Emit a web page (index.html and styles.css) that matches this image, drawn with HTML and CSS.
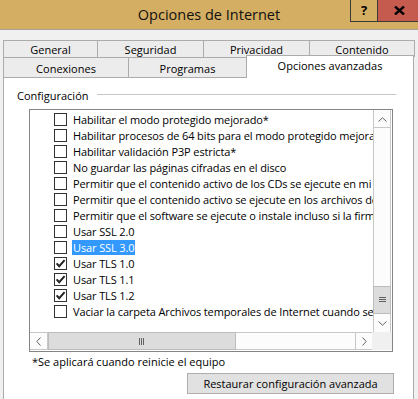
FILE: index.html
```html
<!DOCTYPE html>
<html lang="es">
<head>
  <meta charset="UTF-8" />
  <title>Opciones de Internet</title>
  <link rel="stylesheet" href="styles.css">
</head>
<body>
  <!-- =========  TITLE BAR  ========= -->
  <header class="titlebar">
    <h1 class="title">Opciones de Internet</h1>
    <div class="win-btns">
      <button class="win-btn help" aria-label="Ayuda">?</button>
      <button class="win-btn close" aria-label="Cerrar">
        <svg width="11" height="9" viewBox="0 0 11 9"><path d="M1 0.5 L10 8.5 M10 0.5 L1 8.5" stroke="#000" stroke-width="2.4"/></svg>
      </button>
    </div>
  </header>

  <!-- =========  TABS  ========= -->
  <nav class="tabs">
    <div class="tab-row row-top">
      <span class="tab t-general">General</span>
      <span class="tab t-seg">Seguridad</span>
      <span class="tab t-priv">Privacidad</span>
      <span class="tab t-cont last">Contenido</span>
    </div>
    <div class="tab-row row-bottom">
      <span class="tab t-con">Conexiones</span>
      <span class="tab t-prog">Programas</span>
      <span class="tab t-adv last active">Opciones avanzadas</span>
    </div>
  </nav>

  <!-- =========  PANEL  ========= -->
  <main class="panel">
    <div class="group-head">
      <span>Configuración</span>
      <i class="rule"></i>
    </div>

    <div class="listbox">
      <div class="list-view">
        <ul class="items">
          <li><span class="chk"></span><span class="lbl">Habilitar el modo protegido mejorado*</span></li>
          <li><span class="chk"></span><span class="lbl">Habilitar procesos de 64 bits para el modo protegido mejorado*</span></li>
          <li><span class="chk"></span><span class="lbl">Habilitar validación P3P estricta*</span></li>
          <li><span class="chk"></span><span class="lbl">No guardar las páginas cifradas en el disco</span></li>
          <li><span class="chk"></span><span class="lbl">Permitir que el contenido activo de los CDs se ejecute en mi equipo*</span></li>
          <li><span class="chk"></span><span class="lbl">Permitir que el contenido activo se ejecute en los archivos de mi equipo*</span></li>
          <li><span class="chk"></span><span class="lbl">Permitir que el software se ejecute o instale incluso si la firma no es válida</span></li>
          <li><span class="chk"></span><span class="lbl">Usar SSL 2.0</span></li>
          <li><span class="chk"></span><span class="lbl selected">Usar SSL 3.0</span></li>
          <li><span class="chk on"></span><span class="lbl">Usar TLS 1.0</span></li>
          <li><span class="chk on"></span><span class="lbl">Usar TLS 1.1</span></li>
          <li><span class="chk on"></span><span class="lbl">Usar TLS 1.2</span></li>
          <li><span class="chk"></span><span class="lbl">Vaciar la carpeta Archivos temporales de Internet cuando se cierre el explorador</span></li>
        </ul>

        <div class="vscroll">
          <span class="sb-btn up">
            <svg width="9" height="5" viewBox="0 0 9 5"><path d="M0.5 4.5 L4.5 0.8 L8.5 4.5" fill="none" stroke="#606060"/></svg>
          </span>
          <span class="sb-track"></span>
          <span class="sb-thumb v">
            <svg width="7" height="6" viewBox="0 0 7 6"><path d="M0 0.5 H7 M0 2.5 H7 M0 4.5 H7" stroke="#606060"/></svg>
          </span>
          <span class="sb-btn down">
            <svg width="9" height="5" viewBox="0 0 9 5"><path d="M0.5 0.5 L4.5 4.2 L8.5 0.5" fill="none" stroke="#606060"/></svg>
          </span>
        </div>
      </div>

      <div class="hscroll-row">
        <div class="hscroll">
          <span class="sb-btn left">
            <svg width="5" height="9" viewBox="0 0 5 9"><path d="M4.5 0.5 L0.8 4.5 L4.5 8.5" fill="none" stroke="#606060"/></svg>
          </span>
          <span class="sb-thumb h">
            <svg width="6" height="7" viewBox="0 0 6 7"><path d="M0.5 0 V7 M2.5 0 V7 M4.5 0 V7" stroke="#606060"/></svg>
          </span>
          <span class="sb-track"></span>
          <span class="sb-btn right">
            <svg width="5" height="9" viewBox="0 0 5 9"><path d="M0.5 0.5 L4.2 4.5 L0.5 8.5" fill="none" stroke="#606060"/></svg>
          </span>
        </div>
        <span class="corner"></span>
      </div>
    </div>

    <p class="note">*Se aplicará cuando reinicie el equipo</p>

    <div class="actions">
      <button class="btn">Restaurar configuración avanzada</button>
    </div>
  </main>
</body>
</html>
```

FILE: styles.css
```css
/* --- tokens --- */
:root {
  --title: #d4ae62;
  --face:  #f0f0f0;
  --edge:  #acacac;
  --sb:    #c8c8c8;
  --ui: "Open Sans", "Noto Sans", sans-serif;
}

* { box-sizing: border-box; margin:0; padding:0; }

body {
  font-family: var(--ui);
  font-size: 11px;
  color: #000;
  background: var(--face);
  width: 418px;
  height: 399px;
  overflow: hidden;
}

/* --- title bar --- */
.titlebar {
  height: 30px;
  background: var(--title);
  border-bottom: 1px solid #a9a397;
  display: flex;
  padding-left: 68px;
}
.title {
  flex: 1;
  text-align: center;
  font-weight: 400;
  font-size: 14.5px;
  line-height: 29px;
  color: #111;
}
.win-btns { display:flex; align-items:flex-start; }
.win-btn {
  height: 22px;
  border: none;
  font-family: var(--ui);
  display: flex; align-items: center; justify-content: center;
}
.help {
  width: 28px;
  background: var(--title);
  border: 1px solid #3c3a36;
  border-top: none;
  font-weight: 700;
  font-size: 13px;
  padding-bottom: 1px;
}
.close {
  width: 40px;
  background: #c55a4f;
  border-bottom: 1px solid #3c3a36;
  padding-left: 3px;
}

/* --- tabs --- */
.tabs { padding: 10px 0 0 3px; }
.tab-row { display:flex; }
.row-top { height: 17px; }
.row-bottom { height: 20px; }
.tab {
  display: flex; align-items: center; justify-content: center;
  border-top: 1px solid var(--edge);
  border-left: 1px solid var(--edge);
  background: #ececec;
  padding-top: 1px;
}
.tab.last { border-right: 1px solid var(--edge); }
.t-general { width: 94px; }
.t-seg, .t-priv { width: 106px; }
.t-cont { width: 106px; }
.t-con { width: 125px; }
.t-prog { width: 118px; }
.t-adv { width: 168px; }
.tab.active {
  position: relative;
  z-index: 1;
  margin-top: -2px;
  height: 23px;
  background: #fff;
  align-items: flex-start;
  padding-top: 2px;
}

/* --- panel --- */
.panel {
  margin: 0 4px 0 3px;
  height: 330px;
  background: #fff;
  border: 1px solid var(--edge);
  padding: 8px 17px 0 13px;
}
.group-head {
  display: flex;
  align-items: center;
  gap: 8px;
  height: 18px;
}
.rule { flex: 1; height: 1px; background: #c6c6c6; margin-top: -2px; }

/* --- list box --- */
.listbox {
  margin: 5px 0 0 12px;
  width: 364px;
  height: 243px;
  border: 1px solid #848484;
  display: flex;
  flex-direction: column;
}
.list-view { display:flex; height: 222px; }
.items {
  list-style: none;
  flex: 1;
  overflow: hidden;
  padding: 1px 0 0 24px;
  letter-spacing: -0.12px;
}
.items li {
  height: 16px;
  display: flex;
  align-items: center;
  white-space: nowrap;
}
.chk {
  flex: 0 0 13px;
  height: 13px;
  border: 1px solid #333;
  background: #fff;
  margin-right: 5px;
}
.chk.on {
  background: #fff url("data:image/svg+xml;utf8,<svg xmlns='http://www.w3.org/2000/svg' width='11' height='11'><path d='M1.6 5.4 L4.2 8.2 L9.6 2.2' fill='none' stroke='%23222' stroke-width='2'/></svg>") center/11px no-repeat;
}
.lbl { padding: 0 1px; line-height: 15px; }
.lbl.selected { background: #3399ff; color: #fff; }

/* --- scroll bars --- */
.vscroll {
  width: 18px;
  margin-right: 1px;
  border-left: 1px solid var(--sb);
  border-right: 1px solid var(--sb);
  display: flex;
  flex-direction: column;
  background: #fcfcfc;
}
.sb-btn {
  display: flex; align-items: center; justify-content: center;
  background: #fcfcfc;
}
.up { height: 17px; border-bottom: 1px solid var(--sb); margin-top: 1px; }
.down { height: 18px; }
.sb-track { flex: 1; }
.sb-thumb {
  display: flex; align-items: center; justify-content: center;
  background: #dcdcdc;
  border: 1px solid #bcbcbc;
}
.sb-thumb.v { height: 28px; margin: 0 -1px; }

.hscroll-row { display:flex; height: 18px; }
.hscroll {
  flex: 1;
  display: flex;
  border-top: 1px solid var(--sb);
  border-bottom: 1px solid var(--sb);
  background: #fcfcfc;
}
.left { width: 18px; border-right: 1px solid var(--sb); }
.right { width: 17px; border-left: 1px solid var(--sb); }
.sb-thumb.h { width: 188px; margin: -1px 0; }
.corner { width: 20px; background: var(--face); }

/* --- footer bits --- */
.note { margin: 2px 0 0 15px; line-height: 16px; }
.actions { display:flex; justify-content:flex-end; margin-top: 3px; padding-right: 2px; }
.btn {
  width: 207px;
  height: 21px;
  background: #e1e1e1;
  border: 1px solid #adadad;
  font-family: var(--ui);
  font-size: 11px;
  color: #000;
}
```
